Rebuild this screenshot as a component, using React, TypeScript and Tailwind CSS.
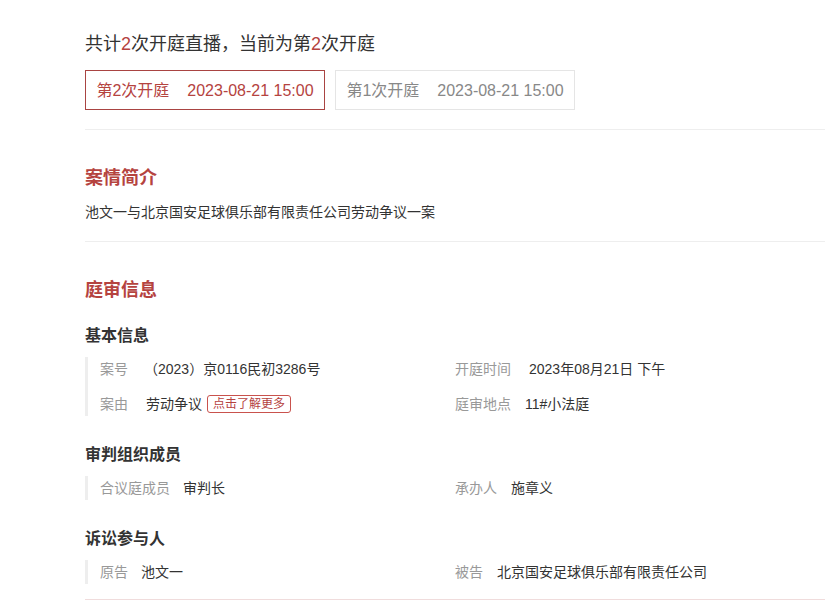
import React from "react";

type Item = { label: string; value: React.ReactNode; gap: string };

function Row({ items }: { items: Item[] }) {
  return (
    <div className="grid grid-cols-[355px_1fr] h-[24px] items-center">
      {items.map((it, i) => (
        <div key={i} className="flex items-center text-[14px]">
          <span className={"text-[#999] " + it.gap}>{it.label}</span>
          <span className="text-[#333] flex items-center">{it.value}</span>
        </div>
      ))}
    </div>
  );
}

function Block({ children }: { children: React.ReactNode }) {
  return (
    <div className="mt-[9px] border-l-[3px] border-[#eeeeee] pl-[12px] flex flex-col gap-[11px]">
      {children}
    </div>
  );
}

export default function App() {
  return (
    <div className="bg-white w-[838px] h-[600px] overflow-hidden font-['Liberation_Sans','Noto_Sans_CJK_SC',sans-serif]">
      <div className="ml-[85px] w-[740px]">
        <div className="pt-[30px] h-[58px] text-[18px] leading-[28px] text-[#333]">
          共计<span className="text-[#b5433f]">2</span>次开庭直播，当前为第<span className="text-[#b5433f]">2</span>次开庭
        </div>
        <div className="mt-[12px] flex gap-[10px]">
          <div className="w-[240px] h-[40px] pt-[2px] border border-[#a94442] flex items-center justify-center text-[16px] text-[#b5433f] gap-[18px]">
            <span>第2次开庭</span>
            <span>2023-08-21 15:00</span>
          </div>
          <div className="w-[240px] h-[40px] pt-[2px] border border-[#e5e5e5] flex items-center justify-center text-[16px] text-[#888] gap-[18px]">
            <span>第1次开庭</span>
            <span>2023-08-21 15:00</span>
          </div>
        </div>
        <div className="mt-[19px] border-t border-[#eeeeee]" />
        <div className="mt-[34px] text-[18px] leading-[28px] font-bold text-[#b5433f]">案情简介</div>
        <div className="mt-[10px] text-[14px] leading-[20px] text-[#333]">
          池文一与北京国安足球俱乐部有限责任公司劳动争议一案
        </div>
        <div className="mt-[19px] border-t border-[#eeeeee]" />
        <div className="mt-[34px] text-[18px] leading-[28px] font-bold text-[#b5433f]">庭审信息</div>
        <div className="mt-[20px] text-[16px] leading-[24px] font-bold text-[#333]">基本信息</div>
        <Block>
          <Row
            items={[
              { label: "案号", value: "（2023）京0116民初3286号", gap: "mr-[16px]" },
              { label: "开庭时间", value: "2023年08月21日 下午", gap: "mr-[18px]" },
            ]}
          />
          <Row
            items={[
              {
                label: "案由",
                gap: "mr-[18px]",
                value: (
                  <>
                    劳动争议
                    <span className="ml-[5px] border border-[#c9524d] rounded-[3px] text-[#b5433f] text-[12px] leading-[16px] px-[5px]">
                      点击了解更多
                    </span>
                  </>
                ),
              },
              { label: "庭审地点", value: "11#小法庭", gap: "mr-[14px]" },
            ]}
          />
        </Block>
        <div className="mt-[27px] text-[16px] leading-[24px] font-bold text-[#333]">审判组织成员</div>
        <Block>
          <Row
            items={[
              { label: "合议庭成员", value: "审判长", gap: "mr-[13px]" },
              { label: "承办人", value: "施章义", gap: "mr-[14px]" },
            ]}
          />
        </Block>
        <div className="mt-[27px] text-[16px] leading-[24px] font-bold text-[#333]">诉讼参与人</div>
        <Block>
          <Row
            items={[
              { label: "原告", value: "池文一", gap: "mr-[13px]" },
              { label: "被告", value: "北京国安足球俱乐部有限责任公司", gap: "mr-[14px]" },
            ]}
          />
        </Block>
        <div className="mt-[15px] border-t border-[#f0dcdc]" />
      </div>
    </div>
  );
}
